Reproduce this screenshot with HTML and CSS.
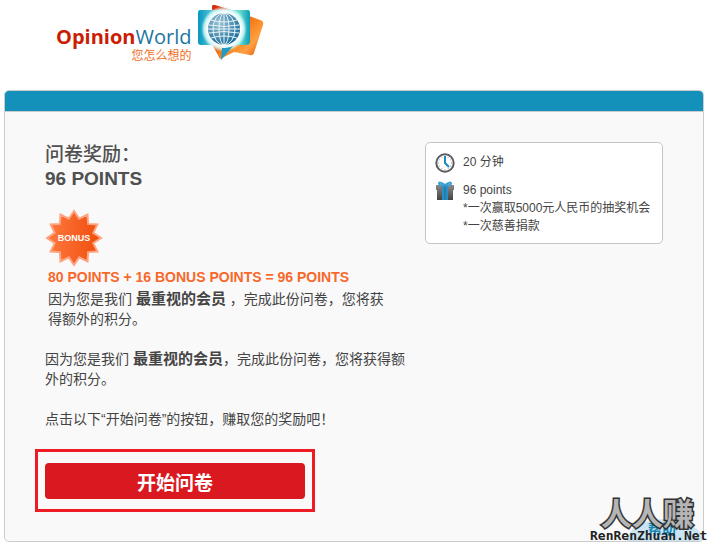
FILE: index.html
```html
<!DOCTYPE html>
<html lang="zh-CN">
<head>
	<meta charset="UTF-8">
	<title>OpinionWorld</title>
	<link rel="stylesheet" href="styles.css">
</head>
<body>

	<div class="header">
		<div class="logo-text">
			<div class="brand"><b>Opinion</b>World</div>
			<div class="slogan">您怎么想的</div>
		</div>
		<svg class="logo" width="68" height="58" viewBox="0 0 68 58">
			<defs>
				<linearGradient id="orange" x1="0" y1="0" x2="1" y2="1">
					<stop offset="0" stop-color="#d8290e"/>
					<stop offset=".4" stop-color="#e85a18"/>
					<stop offset=".55" stop-color="#f5801c"/>
					<stop offset=".75" stop-color="#ffa040"/>
					<stop offset="1" stop-color="#dc4305"/>
				</linearGradient>
				<linearGradient id="teal" x1="0" y1="0" x2="1" y2="0">
					<stop offset="0" stop-color="#0798c0"/>
					<stop offset=".3" stop-color="#5cc8d8"/>
					<stop offset=".8" stop-color="#67dccb"/>
					<stop offset="1" stop-color="#0b9cbb"/>
				</linearGradient>
				<radialGradient id="glow">
					<stop offset=".72" stop-color="#fff"/>
					<stop offset=".86" stop-color="#e5ffff" stop-opacity=".8"/>
					<stop offset="1" stop-color="#c5fff5" stop-opacity="0"/>
				</radialGradient>
				<radialGradient id="globe" cx=".35" cy=".3" r=".75">
					<stop offset="0" stop-color="#9bc3d4"/>
					<stop offset="1" stop-color="#176b9c"/>
				</radialGradient>
			</defs>
			<path d="M15 1q1-2 3-1l20 6 25 9q4 1 3 5l-9 28q-1 3-4 2l-16-3-14 7-7-13z" fill="url(#orange)"/>
			<path d="M3 5h48q2 0 2 3v28q0 4-4 4H37L24 55l2-15H4q-3 0-3-3V8q0-3 2-3z" fill="url(#teal)"/>
			<circle cx="27" cy="24" r="23" fill="url(#glow)"/>
			<path d="M25 43q7 0 11-2L24 55z" fill="#219bc2"/>
			<circle cx="27" cy="24" r="16" fill="url(#globe)"/>
			<g fill="none" stroke="#e9f5f8">
				<ellipse cx="27" cy="24" rx="5" ry="16"/>
				<ellipse cx="27" cy="24" rx="11" ry="16"/>
				<path d="M27 8v32M11 24h32M14 15q13 4 26 0M12 20q15 3 30 0M12 28q15-3 30 0M14 33q13-4 26 0"/>
			</g>
		</svg>
	</div>

	<div class="panel">
		<div class="bar"></div>
		<div class="content">
			<div class="main">
				<h1><span>问卷奖励：</span><br>96 POINTS</h1>
				<svg class="star" width="58" height="58" viewBox="0 0 58 58">
					<defs>
						<linearGradient id="badge" x1="0" y1="0" x2="1" y2="0">
							<stop offset="0" stop-color="#ff793f"/>
							<stop offset="1" stop-color="#ef4d0c"/>
						</linearGradient>
					</defs>
					<path d="M29 2 34.2 9.7 42.5 5.6 43.1 14.9 52.4 15.5 48.3 23.8 56 29 48.3 34.2 52.4 42.5 43.1 43.1 42.5 52.4 34.2 48.3 29 56 23.8 48.3 15.5 52.4 14.9 43.1 5.6 42.5 9.7 34.2 2 29 9.7 23.8 5.6 15.5 14.9 14.9 15.5 5.6 23.8 9.7z" fill="url(#badge)" stroke="#ffa481" stroke-width="2"/>
					<text class="star-text" x="29" y="32" text-anchor="middle">BONUS</text>
				</svg>
				<div class="bonus">
					<h2>80 POINTS + 16 BONUS POINTS = 96 POINTS</h2>
					<p>因为您是我们 <strong>最重视的会员</strong> ，完成此份问卷，您将获得额外的积分。</p>
				</div>
				<p>因为您是我们 <strong>最重视的会员</strong>，完成此份问卷，您将获得额外的积分。</p>
				<p>点击以下<q>开始问卷</q>的按钮，赚取您的奖励吧！</p>
				<div class="frame">
					<button class="start" type="button">开始问卷</button>
				</div>
			</div>

			<div class="info">
				<div class="row">
					<svg width="20" height="20" viewBox="0 0 20 20">
						<circle cx="10" cy="10" r="8.7" fill="#fff" stroke="#5a5c5f" stroke-width="2"/>
						<path d="M10 3v1M10 16v1M3 10h1M16 10h1M6.5 4l.5.8M13.5 4l-.5.8M4 6.5l.8.5M16 6.5l-.8.5M4 13.5l.8-.5M16 13.5l-.8-.5M6.5 16l.5-.8M13.5 16l-.5-.8" stroke="#999"/>
						<path d="M10 3v7l4 4" fill="none" stroke="#2287bd" stroke-width="2"/>
					</svg>
					<div>20 分钟</div>
				</div>
				<div class="row">
					<svg width="20" height="20" viewBox="0 0 20 20">
						<defs>
							<linearGradient id="box" x1="0" y1="0" x2="0" y2="1">
								<stop offset="0" stop-color="#8a8a8a"/>
								<stop offset="1" stop-color="#444"/>
							</linearGradient>
						</defs>
						<path d="M1 4h18v5h-1v10H2V9H1z" fill="url(#box)"/>
						<path d="M7 4h6v15H7z" fill="#2b8fc5"/>
						<path d="M10 4v15" stroke="#1870a0"/>
						<path d="M10 4Q4 5 4 2.500T10 4Q16 5 16 2.500T10 4" fill="#d5eef8" stroke="#3aa0d2" stroke-width="2"/>
					</svg>
					<div>96 points<br>*一次赢取5000元人民币的抽奖机会<br>*一次慈善捐款</div>
				</div>
			</div>
		</div>
		<a class="help" href="#">帮助</a>
	</div>

	<div class="watermark">
		<svg width="120" height="54" viewBox="0 0 120 54">
			<text class="mark-name" x="13" y="34">人人赚</text>
			<text class="mark-site" x="2" y="49">RenRenZhuan.Net</text>
		</svg>
	</div>

</body>
</html>
```

FILE: styles.css
```css
* {
	margin: 0;
	padding: 0;
	box-sizing: border-box;
}
body {
	padding: 0 4px 4px;
	background: #fff;
	color: #444;
	font-family: "Liberation Sans", "Noto Sans CJK SC", sans-serif;
	font-size: 14px;
	line-height: 20px;
}
.header {
	display: flex;
	align-items: flex-start;
	gap: 6px;
	height: 90px;
	padding: 5px 0 0 52px;
}
.logo-text {
	padding-top: 20px;
}
.brand {
	color: #1c759f;
	font-family: "Open Sans", sans-serif;
	font-size: 20px;
	line-height: 24px;
}
.brand b {
	color: #cb1c04;
}
.slogan {
	color: #f36c21;
	font-size: 12px;
	line-height: 14px;
	text-align: right;
}
.panel {
	position: relative;
	border: 1px solid #ccc;
	border-radius: 5px;
	background: #f9f9f9;
	overflow: hidden;
}
.bar {
	height: 21px;
	background: #1391bb;
	border-bottom: 1px solid #ccc;
}
.content {
	display: flex;
	justify-content: space-between;
	align-items: flex-start;
	padding: 30px 40px 29px 30px;
}
.main {
	width: 380px;
}
.main > p {
	padding: 0 8px 0 10px;
	margin-bottom: 20px;
}
h1 {
	padding: 1px 0 0 10px;
	color: #505050;
	font-size: 19px;
	line-height: 24px;
}
h1 span {
	font-weight: 500;
}
.star {
	display: block;
	margin: 18px 0 0 10px;
}
.star-text {
	fill: #fff;
	font-size: 9px;
	font-weight: bold;
}
.bonus {
	padding: 0 30px 0 13px;
	margin-bottom: 20px;
}
h2 {
	margin-bottom: 2px;
	color: #f7682a;
	font-size: 14px;
	line-height: 20px;
	white-space: nowrap;
}
strong {
	font-size: 15px;
}
q {
	quotes: "“" "”";
}
.frame {
	width: 280px;
	padding: 11px 7px 10px;
	border: 3px solid #ed1c24;
}
.start {
	display: block;
	width: 100%;
	height: 36px;
	border: 0;
	border-radius: 4px;
	background: #d9191f;
	color: #fff;
	font-family: inherit;
	font-size: 19px;
	font-weight: bold;
	cursor: pointer;
}
.info {
	display: flex;
	flex-direction: column;
	gap: 8px;
	width: 238px;
	padding: 10px 9px 8px;
	border: 1px solid #c4c4c4;
	border-radius: 5px;
	background: #fff;
	font-size: 12px;
	line-height: 18px;
	white-space: nowrap;
}
.row {
	display: flex;
	gap: 8px;
}
.help {
	position: absolute;
	right: 0;
	bottom: 0;
	width: 76px;
	height: 22px;
	padding-right: 6px;
	border-radius: 50% 50% 0 0 / 100% 100% 0 0;
	background: #c9e5f3;
	color: #1684b4;
	font-weight: bold;
	text-align: center;
	text-decoration: none;
}
.watermark {
	position: absolute;
	top: 491px;
	right: 0;
	pointer-events: none;
}
.watermark svg {
	display: block;
}
.mark-name {
	fill: #b5b5b5;
	stroke: #333;
	stroke-width: 3px;
	paint-order: stroke;
	font-family: "Noto Sans CJK SC", sans-serif;
	font-size: 31px;
	font-weight: bold;
}
.mark-site {
	fill: #222;
	font-family: "DejaVu Sans Mono", monospace;
	font-size: 13px;
	font-weight: bold;
}
```
